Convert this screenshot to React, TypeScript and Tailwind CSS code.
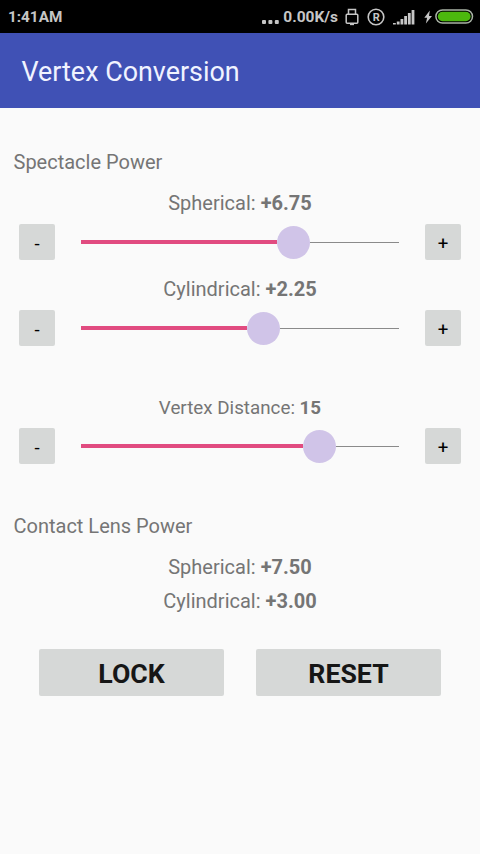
import { useState } from "react";

const TRACK_WIDTH = 318;

function StatusBar() {
  return (
    <div className="flex h-[33px] items-center justify-between bg-black pr-[6px] pl-2 text-[#c6c6c6]">
      <span className="pt-px text-[15.3px] leading-[34px] font-bold">1:41AM</span>
      <div className="flex items-center">
        <svg width="19" height="20" viewBox="0 0 19 20" fill="currentColor">
          <rect x="0" y="13" width="4" height="4" rx="1" />
          <rect x="6.4" y="13" width="4" height="4" rx="1" />
          <rect x="12.8" y="13" width="4" height="4" rx="1" />
        </svg>
        <span className="mr-[7px] ml-[2px] pt-px text-[15.5px] leading-[34px] font-bold">
          0.00K/s
        </span>
        <svg
          width="14"
          height="18"
          viewBox="0 0 14 18"
          fill="none"
          stroke="currentColor"
          strokeWidth="1.5"
        >
          <path d="M3.5 6.2V1.5h7v4.7" />
          <rect x="1.2" y="6.2" width="11.6" height="9" rx="1" />
          <path d="M5 16.4h4" />
        </svg>
        <svg className="ml-[8px]" width="18" height="18" viewBox="0 0 18 18" fill="none">
          <circle cx="9" cy="9" r="7.8" stroke="currentColor" strokeWidth="1.6" />
          <text
            x="9.2"
            y="13"
            textAnchor="middle"
            fontSize="11"
            fontWeight="bold"
            fill="currentColor"
          >
            R
          </text>
        </svg>
        <svg className="ml-[8px]" width="23" height="16" viewBox="0 0 23 16" fill="currentColor">
          <rect x="0" y="14" width="2.8" height="1.5" />
          <rect x="3.8" y="12.5" width="2.8" height="3" />
          <rect x="7.5" y="10" width="2.8" height="5.5" />
          <rect x="11.2" y="7" width="2.8" height="8.5" />
          <rect x="14.9" y="4" width="2.8" height="11.5" />
          <rect x="18.6" y="1" width="2.8" height="14.5" />
        </svg>
        <svg className="ml-[8px]" width="9" height="14" viewBox="0 0 9 14" fill="currentColor">
          <path d="M5.8 0.5L0.3 7.8h2.8L1.9 13.5l6.1-7.6H5z" />
        </svg>
        <svg className="ml-[2px]" width="39" height="15" viewBox="0 0 39 15">
          <rect
            x="0.9"
            y="0.9"
            width="36.6"
            height="13.2"
            rx="6.6"
            fill="none"
            stroke="#a9b3a5"
            strokeWidth="1.5"
          />
          <rect x="2.8" y="2.8" width="32.8" height="9.4" rx="4.7" fill="#4cb80e" />
        </svg>
      </div>
    </div>
  );
}

type StepButtonProps = {
  label: string;
  onClick: () => void;
};

function StepButton({ label, onClick }: StepButtonProps) {
  return (
    <button
      onClick={onClick}
      className="flex size-9 items-center justify-center rounded-xs bg-[#d6d8d7] pt-[4px] text-[18.7px] leading-none text-black"
    >
      {label}
    </button>
  );
}

function Reading({ label, value }: { label: string; value: string }) {
  return (
    <p className="text-center">
      {label}: <b>{value}</b>
    </p>
  );
}

type SliderProps = {
  label: string;
  display: string;
  position: number;
  onStep: (delta: number) => void;
};

function Slider({ label, display, position, onStep }: SliderProps) {
  const filled = Math.min(1, Math.max(0, position)) * TRACK_WIDTH;

  return (
    <div>
      <Reading label={label} value={display} />
      <div className="mt-[9px] flex h-9 items-center justify-between px-[19px]">
        <StepButton label="-" onClick={() => onStep(-1)} />
        <div className="flex w-[318px] items-center">
          <div className="h-1 shrink-0 bg-[#e14b80]" style={{ width: filled - 16.5 }} />
          <div className="size-[33px] shrink-0 rounded-full bg-[#d0c4e8]" />
          <div className="h-px grow bg-[#8a8a8a]" />
        </div>
        <StepButton label="+" onClick={() => onStep(1)} />
      </div>
    </div>
  );
}

function signed(value: number) {
  return (value >= 0 ? "+" : "") + value.toFixed(2);
}

export default function App() {
  const [sphere, setSphere] = useState(6.75);
  const [cylinder, setCylinder] = useState(2.25);
  const [distance, setDistance] = useState(15);
  const [locked, setLocked] = useState(false);

  function step(update: () => void) {
    if (!locked) update();
  }

  function reset() {
    setSphere(0);
    setCylinder(0);
    setDistance(12);
    setLocked(false);
  }

  // effective power at the cornea, rounded to the nearest quarter dioptre
  const vertex = (power: number) => Math.round((power / (1 - (distance / 1000) * power)) * 4) / 4;
  const lensSphere = vertex(sphere);
  const lensCylinder = vertex(sphere + cylinder) - lensSphere;

  return (
    <div className="flex h-[854px] w-[480px] flex-col overflow-hidden bg-[#fafafa] font-['Roboto',sans-serif] text-[#757575]">
      <StatusBar />
      <header className="flex h-[75px] items-center bg-[#4051b5] px-[21.5px] pt-[2px]">
        <h1 className="text-[26.9px] leading-8 text-[#f0f3ff]">Vertex Conversion</h1>
      </header>

      <main className="flex flex-col pt-[42px] text-[20px] leading-6">
        <h2 className="px-[13.5px]">Spectacle Power</h2>
        <div className="mt-[17px] flex flex-col gap-[17px]">
          <Slider
            label="Spherical"
            display={signed(sphere)}
            position={0.669 + (sphere - 6.75) / 40}
            onStep={(d) => step(() => setSphere(sphere + d * 0.25))}
          />
          <Slider
            label="Cylindrical"
            display={signed(cylinder)}
            position={0.575 + (cylinder - 2.25) / 30}
            onStep={(d) => step(() => setCylinder(cylinder + d * 0.25))}
          />
        </div>
        <div className="mt-[51px] text-[18.8px] leading-[22px]">
          <Slider
            label="Vertex Distance"
            display={String(distance)}
            position={distance / 20}
            onStep={(d) => step(() => setDistance(distance + d))}
          />
        </div>

        <h2 className="mt-[50px] px-[13.5px]">Contact Lens Power</h2>
        <div className="mt-[17px] flex flex-col gap-[10px]">
          <Reading label="Spherical" value={signed(lensSphere)} />
          <Reading label="Cylindrical" value={signed(lensCylinder)} />
        </div>

        <div className="mt-9 flex justify-center gap-8 text-[26.7px] font-bold text-[#161616]">
          <button
            onClick={() => setLocked(!locked)}
            className="h-[47px] w-[185px] rounded-xs bg-[#d6d8d7] pt-[4px] leading-none"
          >
            LOCK
          </button>
          <button
            onClick={reset}
            className="h-[47px] w-[185px] rounded-xs bg-[#d6d8d7] pt-[4px] leading-none"
          >
            RESET
          </button>
        </div>
      </main>
    </div>
  );
}
